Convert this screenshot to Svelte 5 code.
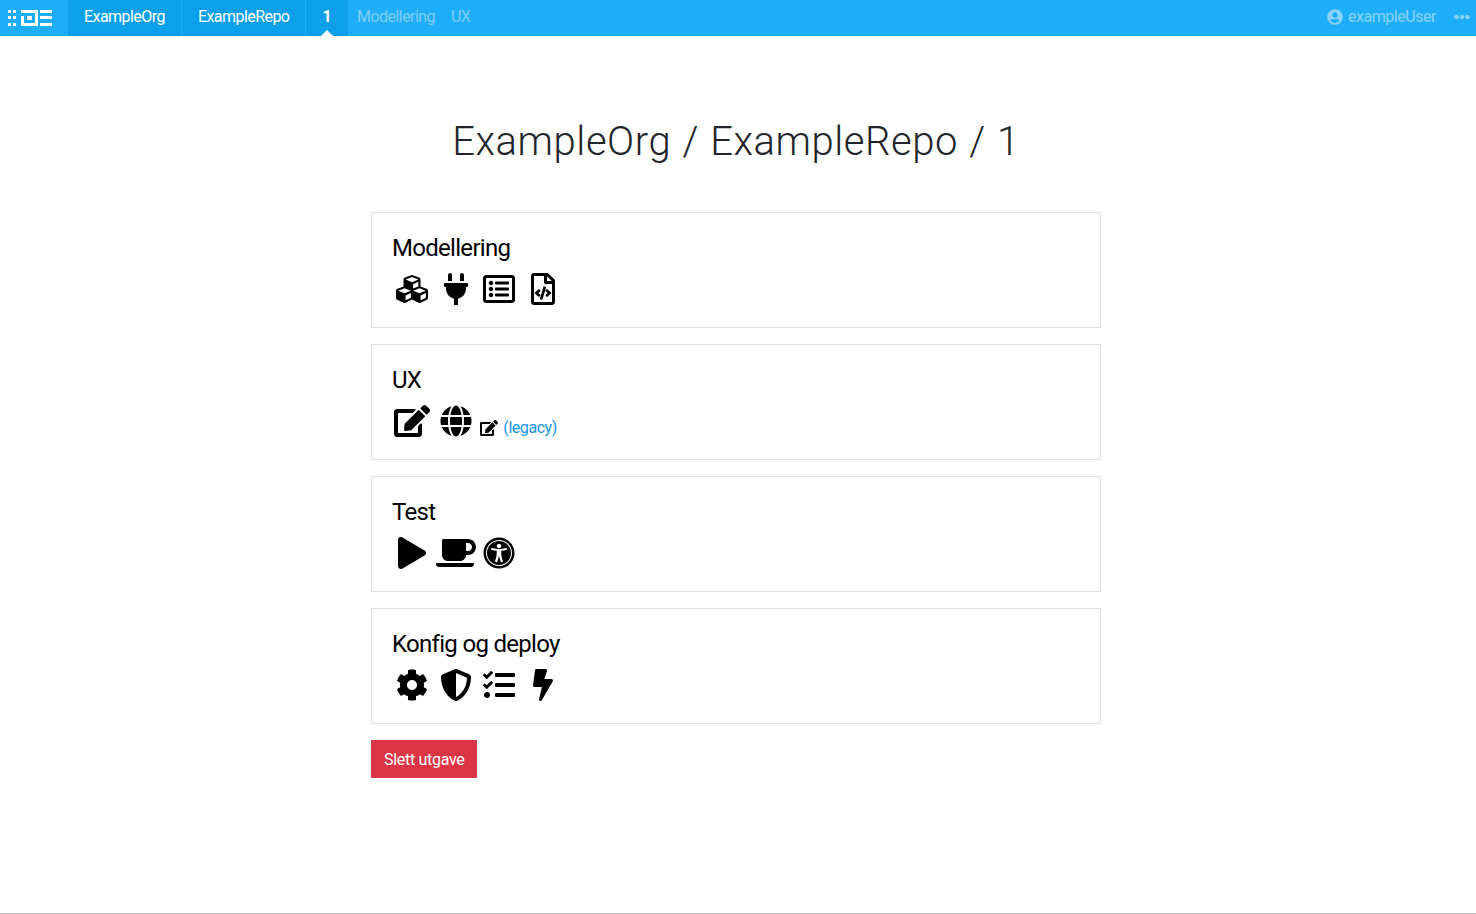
<script lang="ts">
  const icons = {
    cubes: { w: 512, d: 'M488.6 250.2L392 214V105.5c0-15-9.3-28.4-23.4-33.7l-100-37.5c-8.1-3.1-17.1-3.1-25.3 0l-100 37.5c-14.1 5.3-23.4 18.7-23.4 33.7V214l-96.6 36.2C9.3 255.5 0 268.9 0 283.9V394c0 13.6 7.7 26.1 19.9 32.2l100 50c10.1 5.1 22.1 5.1 32.2 0l103.9-52 103.9 52c10.1 5.1 22.1 5.1 32.2 0l100-50c12.2-6.1 19.9-18.6 19.9-32.2V283.9c0-15-9.3-28.4-23.4-33.7zM358 214.8l-85 31.9v-68.2l85-37v73.3zM154 104.1l102-38.2 102 38.2v.6l-102 41.4-102-41.4v-.6zm84 291.1l-85 42.5v-79.1l85-38.8v75.4zm0-112l-102 41.4-102-41.4v-.6l102-38.2 102 38.2v.6zm240 112l-85 42.5v-79.1l85-38.8v75.4zm0-112l-102 41.4-102-41.4v-.6l102-38.2 102 38.2v.6z' },
    plug: { w: 384, d: 'M320,32a32,32,0,0,0-64,0v96h64Zm48,128H16A16,16,0,0,0,0,176v32a16,16,0,0,0,16,16H32v32A160.07,160.07,0,0,0,160,412.8V512h64V412.8A160.07,160.07,0,0,0,352,256V224h16a16,16,0,0,0,16-16V176A16,16,0,0,0,368,160ZM128,32a32,32,0,0,0-64,0v96h64Z' },
    listAlt: { w: 512, d: 'M464 32H48C21.49 32 0 53.49 0 80v352c0 26.51 21.49 48 48 48h416c26.51 0 48-21.49 48-48V80c0-26.51-21.49-48-48-48zm-6 400H54a6 6 0 0 1-6-6V86a6 6 0 0 1 6-6h404a6 6 0 0 1 6 6v340a6 6 0 0 1-6 6zm-42-92v24c0 6.627-5.373 12-12 12H204c-6.627 0-12-5.373-12-12v-24c0-6.627 5.373-12 12-12h200c6.627 0 12 5.373 12 12zm0-96v24c0 6.627-5.373 12-12 12H204c-6.627 0-12-5.373-12-12v-24c0-6.627 5.373-12 12-12h200c6.627 0 12 5.373 12 12zm0-96v24c0 6.627-5.373 12-12 12H204c-6.627 0-12-5.373-12-12v-24c0-6.627 5.373-12 12-12h200c6.627 0 12 5.373 12 12zm-252 12c0 19.882-16.118 36-36 36s-36-16.118-36-36 16.118-36 36-36 36 16.118 36 36zm0 96c0 19.882-16.118 36-36 36s-36-16.118-36-36 16.118-36 36-36 36 16.118 36 36zm0 96c0 19.882-16.118 36-36 36s-36-16.118-36-36 16.118-36 36-36 36 16.118 36 36z' },
    fileCode: { w: 384, d: 'M149.9 349.1l-.2-.2-32.8-28.9 32.8-28.9c3.6-3.2 4-8.8.8-12.4l-.2-.2-17.4-18.6c-3.4-3.6-9-3.7-12.4-.4l-57.7 54.1c-3.7 3.5-3.7 9.4 0 12.8l57.7 54.1c1.6 1.5 3.8 2.4 6 2.4 2.4 0 4.8-1 6.4-2.8l17.4-18.6c3.3-3.5 3.1-9.1-.4-12.4zm220-251.2L286 14C277 5 264.8-.1 252.1-.1H48C21.5 0 0 21.5 0 48v416c0 26.5 21.5 48 48 48h288c26.5 0 48-21.5 48-48V131.9c0-12.7-5.1-25-14.1-34zM256 51.9l76.1 76.1H256zM336 464H48V48h160v104c0 13.3 10.7 24 24 24h104zM209.6 214c-4.7-1.4-9.5 1.3-10.9 6L144 408.1c-1.4 4.7 1.3 9.6 6 10.9l24.4 7.1c4.7 1.4 9.6-1.4 10.9-6L240 231.9c1.4-4.7-1.3-9.6-6-10.9zm24.5 76.9l.2.2 32.8 28.9-32.8 28.9c-3.6 3.2-4 8.8-.8 12.4l.2.2 17.4 18.6c3.3 3.5 8.9 3.7 12.4.4l57.7-54.1c3.7-3.5 3.7-9.4 0-12.8l-57.7-54.1c-3.5-3.3-9.1-3.2-12.4.4l-17.4 18.6c-3.3 3.5-3.1 9.1.4 12.4z' },
    edit: { w: 576, d: 'M402.6 83.2l90.2 90.2c3.8 3.8 3.8 10 0 13.8L274.4 405.6l-92.8 10.3c-12.4 1.4-22.9-9.1-21.5-21.5l10.3-92.8L388.8 83.2c3.8-3.8 10-3.8 13.8 0zm162-22.9l-48.8-48.8c-15.2-15.2-39.9-15.2-55.2 0l-35.4 35.4c-3.8 3.8-3.8 10 0 13.8l90.2 90.2c3.8 3.8 10 3.8 13.8 0l35.4-35.4c15.2-15.3 15.2-40 0-55.2zM384 346.2V448H64V128h229.8c3.2 0 6.2-1.3 8.5-3.5l40-40c7.6-7.6 2.2-20.5-8.5-20.5H48C21.5 64 0 85.5 0 112v352c0 26.5 21.5 48 48 48h352c26.5 0 48-21.5 48-48V306.2c0-10.7-12.9-16-20.5-8.5l-40 40c-2.2 2.3-3.5 5.3-3.5 8.5z' },
    globe: { w: 496, d: 'M336.5 160C322 70.7 287.8 8 248 8s-74 62.7-88.5 152h177zM152 256c0 22.2 1.2 43.5 3.3 64h185.3c2.1-20.5 3.3-41.8 3.3-64s-1.2-43.5-3.3-64H155.3c-2.1 20.5-3.3 41.8-3.3 64zm324.7-96c-28.6-67.9-86.5-120.4-158-141.6 24.4 33.8 41.2 84.7 50 141.6h108zM177.2 18.4C105.8 39.6 47.8 92.1 19.3 160h108c8.7-56.9 25.5-107.8 49.9-141.6zM487.4 192H372.7c2.1 21 3.3 42.5 3.3 64s-1.2 43-3.3 64h114.6c5.5-20.5 8.6-41.8 8.6-64s-3.1-43.5-8.5-64zM120 256c0-21.5 1.2-43 3.3-64H8.6C3.2 212.5 0 233.8 0 256s3.2 43.5 8.6 64h114.6c-2-21-3.2-42.5-3.2-64zm39.5 96c14.5 89.3 48.7 152 88.5 152s74-62.7 88.5-152h-177zm159.3 141.6c71.4-21.2 129.4-73.7 158-141.6h-108c-8.8 56.9-25.6 107.8-50 141.6zM19.3 352c28.6 67.9 86.5 120.4 158 141.6-24.4-33.8-41.2-84.7-50-141.6h-108z' },
    play: { w: 448, d: 'M424.4 214.7L72.4 6.6C43.8-10.3 0 6.1 0 47.9V464c0 37.5 40.7 60.1 72.4 41.3l352-208c31.4-18.5 31.5-64.1 0-82.6z' },
    coffee: { w: 640, d: 'M192 384h192c53 0 96-43 96-96h32c70.6 0 128-57.4 128-128S582.6 32 512 32H120c-13.3 0-24 10.7-24 24v232c0 53 43 96 96 96zM512 96c35.3 0 64 28.7 64 64s-28.7 64-64 64h-32V96h32zm47.7 384H48.3c-47.6 0-61-64-36-64h583.3c25 0 11.8 64-35.9 64z' },
    access: { w: 512, d: 'M256 48c114.953 0 208 93.029 208 208 0 114.953-93.029 208-208 208-114.953 0-208-93.029-208-208 0-114.953 93.029-208 208-208m0-40C119.033 8 8 119.033 8 256s111.033 248 248 248 248-111.033 248-248S392.967 8 256 8zm0 56C149.961 64 64 149.961 64 256s85.961 192 192 192 192-85.961 192-192S362.039 64 256 64zm0 44c19.882 0 36 16.118 36 36s-16.118 36-36 36-36-16.118-36-36 16.118-36 36-36zm117.741 98.023c-28.712 6.779-55.511 12.748-82.14 15.807.851 101.023 12.306 123.052 25.037 155.621 3.617 9.26-.957 19.698-10.217 23.315-9.261 3.617-19.699-.957-23.316-10.217-8.705-22.308-17.086-40.636-22.261-78.549h-9.686c-5.167 37.851-13.534 56.208-22.262 78.549-3.615 9.255-14.05 13.836-23.315 10.217-9.26-3.617-13.834-14.056-10.217-23.315 12.713-32.541 24.185-54.541 25.037-155.621-26.629-3.058-53.428-9.027-82.141-15.807-8.6-2.031-13.926-10.648-11.895-19.249s10.647-13.926 19.249-11.895c96.686 22.829 124.283 22.783 220.775 0 8.599-2.03 17.218 3.294 19.249 11.895 2.029 8.601-3.297 17.219-11.897 19.249z' },
    cog: { w: 512, d: 'M487.4 315.7l-42.6-24.6c4.3-23.2 4.3-47 0-70.2l42.6-24.6c4.9-2.8 7.1-8.6 5.5-14-11.1-35.6-30-67.8-54.7-94.6-3.8-4.1-10-5.1-14.8-2.3L380.8 110c-17.9-15.4-38.5-27.3-60.8-35.1V25.8c0-5.6-3.9-10.5-9.4-11.7-36.7-8.2-74.3-7.8-109.2 0-5.5 1.2-9.4 6.1-9.4 11.7V75c-22.2 7.9-42.8 19.8-60.8 35.1L88.7 85.5c-4.9-2.8-11-1.9-14.8 2.3-24.7 26.7-43.6 58.9-54.7 94.6-1.7 5.4.6 11.2 5.5 14L67.3 221c-4.3 23.2-4.3 47 0 70.2l-42.6 24.6c-4.9 2.8-7.1 8.6-5.5 14 11.1 35.6 30 67.8 54.7 94.6 3.8 4.1 10 5.1 14.8 2.3l42.6-24.6c17.9 15.4 38.5 27.3 60.8 35.1v49.2c0 5.6 3.9 10.5 9.4 11.7 36.7 8.2 74.3 7.8 109.2 0 5.5-1.2 9.4-6.1 9.4-11.7v-49.2c22.2-7.9 42.8-19.8 60.8-35.1l42.6 24.6c4.9 2.8 11 1.9 14.8-2.3 24.7-26.7 43.6-58.9 54.7-94.6 1.5-5.5-.7-11.3-5.6-14.1zM256 336c-44.1 0-80-35.9-80-80s35.9-80 80-80 80 35.9 80 80-35.9 80-80 80z' },
    shield: { w: 512, d: 'M466.5 83.7l-192-80a48.15 48.15 0 0 0-36.9 0l-192 80C27.7 91.1 16 108.6 16 128c0 198.5 114.5 335.7 221.5 380.3 11.8 4.9 25.1 4.9 36.9 0C360.1 472.6 496 349.3 496 128c0-19.4-11.7-36.9-29.5-44.3zM256.1 446.3l-.1-381 175.9 73.3c-3.3 151.4-82.1 261.1-175.8 307.7z' },
    tasks: { w: 512, d: 'M139.61 35.5a12 12 0 0 0-17 0L58.93 98.81l-22.7-22.12a12 12 0 0 0-17 0L3.53 92.41a12 12 0 0 0 0 17l47.59 47.4a12.78 12.78 0 0 0 17.61 0l15.59-15.62L156.52 69a12.09 12.09 0 0 0 .09-17zm0 159.19a12 12 0 0 0-17 0l-63.68 63.72-22.7-22.1a12 12 0 0 0-17 0L3.53 252a12 12 0 0 0 0 17L51 316.5a12.77 12.77 0 0 0 17.6 0l15.7-15.69 72.2-72.22a12 12 0 0 0 .09-16.9zM64 368c-26.49 0-48.59 21.5-48.59 48S37.53 464 64 464a48 48 0 0 0 0-96zm432 16H208a16 16 0 0 0-16 16v32a16 16 0 0 0 16 16h288a16 16 0 0 0 16-16v-32a16 16 0 0 0-16-16zm0-320H208a16 16 0 0 0-16 16v32a16 16 0 0 0 16 16h288a16 16 0 0 0 16-16V80a16 16 0 0 0-16-16zm0 160H208a16 16 0 0 0-16 16v32a16 16 0 0 0 16 16h288a16 16 0 0 0 16-16v-32a16 16 0 0 0-16-16z' },
    bolt: { w: 320, d: 'M296 160H180.6l42.6-129.8C227.2 15 215.7 0 200 0H56C44 0 33.8 8.9 32.2 20.8l-32 240C-1.7 275.2 9.5 288 24 288h118.7L96.6 482.5c-3.6 15.2 8 29.5 23.3 29.5 8.4 0 16.4-4.4 20.8-12l176-304c9.3-15.9-2.2-36-20.7-36z' },
    user: { w: 496, d: 'M248 8C111 8 0 119 0 256s111 248 248 248 248-111 248-248S385 8 248 8zm0 96c48.6 0 88 39.4 88 88s-39.4 88-88 88-88-39.4-88-88 39.4-88 88-88zm0 344c-58.7 0-111.3-26.6-146.5-68.2 18.8-35.4 55.6-59.8 98.5-59.8 2.4 0 4.8.4 7.1 1.1 13 4.2 26.6 6.9 40.9 6.9 14.3 0 28-2.7 40.9-6.9 2.3-.7 4.7-1.1 7.1-1.1 42.9 0 79.7 24.4 98.5 59.8C359.3 421.4 306.7 448 248 448z' },
    dots: { w: 512, d: 'M328 256c0 39.8-32.2 72-72 72s-72-32.2-72-72 32.2-72 72-72 72 32.2 72 72zm104-72c-39.8 0-72 32.2-72 72s32.2 72 72 72 72-32.2 72-72-32.2-72-72-72zm-352 0c-39.8 0-72 32.2-72 72s32.2 72 72 72 72-32.2 72-72-32.2-72-72-72z' }
  };

  const sections = [
    { title: 'Modellering', tools: ['cubes', 'plug', 'listAlt', 'fileCode'] },
    { title: 'UX', tools: ['edit', 'globe'], legacy: true },
    { title: 'Test', tools: ['play', 'coffee', 'access'] },
    { title: 'Konfig og deploy', tools: ['cog', 'shield', 'tasks', 'bolt'] }
  ];
</script>

{#snippet icon(name, cls)}
  <svg class={cls} viewBox="0 0 {icons[name].w} 512" fill="currentColor" aria-hidden="true"><path d={icons[name].d} /></svg>
{/snippet}

<nav class="topbar">
  <a class="logo" href="#top" aria-label="Hjem">
    <svg width="44" height="16" viewBox="0 0 44 16" fill="#fff">
      <rect x="0" y="0" width="3" height="3" /><rect x="5" y="0" width="3" height="3" />
      <rect x="0" y="6" width="3" height="3" /><rect x="5" y="6" width="3" height="3" />
      <rect x="0" y="13" width="3" height="3" /><rect x="5" y="13" width="3" height="3" />
      <path d="M13 0h17v16H13V6h3v7h11V3H13z" />
      <path d="M19 6h5v4h-5z" />
      <path d="M32 0h12v3H32zM32 6h12v3H32zM32 13h12v3H32z" />
    </svg>
  </a>
  <a class="crumb" href="#top">ExampleOrg</a>
  <a class="crumb" href="#top">ExampleRepo</a>
  <a class="crumb current" href="#top">1</a>
  <a class="sub" href="#top">Modellering</a>
  <a class="sub" href="#top">UX</a>
  <div class="user">
    {@render icon('user', 'user-icon')}
    <span>exampleUser</span>
    {@render icon('dots', 'dots-icon')}
  </div>
</nav>

<div class="page">
  <main>
    <h1>ExampleOrg / ExampleRepo / 1</h1>
    {#each sections as section}
      <section class="card">
        <h2>{section.title}</h2>
        <div class="tools">
          {#each section.tools as tool}
            <a href="#top" class="tool">{@render icon(tool, 'big')}</a>{' '}
          {/each}
          {#if section.legacy}
            <a href="#top" class="legacy">{@render icon('edit', 'small')} (legacy)</a>
          {/if}
        </div>
      </section>
    {/each}
    <button type="button" class="danger">Slett utgave</button>
  </main>
</div>

<style>
  :global(html) {
    height: 914px;
    overflow: hidden;
    box-shadow: inset 0 -1px 0 #c4c4c4;
  }

  :global(body) {
    margin: 0;
    font-family: Roboto, "Liberation Sans", sans-serif;
    font-size: 16px;
    line-height: 1.5;
    color: #212529;
  }

  .topbar {
    display: flex;
    align-items: stretch;
    height: 36px;
    background: #1eaef9;
    letter-spacing: -0.55px;
  }

  .topbar a {
    text-decoration: none;
  }

  .logo {
    display: flex;
    align-items: center;
    width: 60px;
    padding-left: 8px;
    padding-bottom: 1px;
  }

  .crumb {
    display: flex;
    align-items: center;
    padding: 0 16px 2px;
    color: #fff;
    background: #0c9fea;
    border-right: 1px solid #1eaef9;
    position: relative;
  }

  .current {
    font-weight: 700;
    padding-right: 17px;
    border-right: 0;
  }

  .current::after {
    content: '';
    position: absolute;
    left: 50%;
    bottom: 0;
    margin-left: -6px;
    border: 6px solid transparent;
    border-top: 0;
    border-bottom-color: #fff;
  }

  .sub {
    display: flex;
    align-items: center;
    margin-left: 9px;
    padding: 0 7px 2px 0;
    color: #7fcdf7;
  }

  .user {
    display: flex;
    align-items: center;
    margin-left: auto;
    padding: 0 6px 2px 0;
    color: #8ad2f8;
    letter-spacing: -0.45px;
  }

  .user-icon {
    width: 16px;
    height: 16px;
    margin-right: 5px;
  }

  .dots-icon {
    width: 16px;
    height: 16px;
    margin-left: 18px;
  }

  .page {
    padding-right: 4px;
  }

  main {
    width: 730px;
    margin: 0 auto;
    padding-top: 82px;
  }

  h1 {
    margin: 0 0 46px;
    font-size: 40px;
    font-weight: 300;
    line-height: 1.2;
    letter-spacing: 0.55px;
    word-spacing: 1px;
    text-align: center;
  }

  .card {
    box-sizing: border-box;
    height: 116px;
    margin-bottom: 16px;
    padding: 21px 20px 0;
    border: 1px solid #dfdfdf;
    color: #000;
  }

  h2 {
    margin: 0 0 10px;
    font-size: 24px;
    font-weight: 400;
    line-height: 1.2;
    letter-spacing: -0.7px;
  }

  .tools {
    line-height: 32px;
    word-spacing: -0.3px;
  }

  .tool {
    color: #000;
    display: inline-block;
    vertical-align: top;
  }

  .big {
    display: block;
    width: 40px;
    height: 32px;
  }

  .legacy {
    color: #1595e6;
    text-decoration: none;
    display: inline-block;
    vertical-align: top;
    margin: 7px 0 0 1px;
    letter-spacing: -0.45px;
    word-spacing: 1.5px;
  }

  .small {
    width: 18px;
    height: 16px;
    color: #000;
    vertical-align: -3px;
  }

  .danger {
    display: block;
    height: 38px;
    padding: 0 13px;
    border: 0;
    background: #dc3545;
    color: #fff;
    font: inherit;
    letter-spacing: -0.3px;
    line-height: 40px;
  }
</style>
